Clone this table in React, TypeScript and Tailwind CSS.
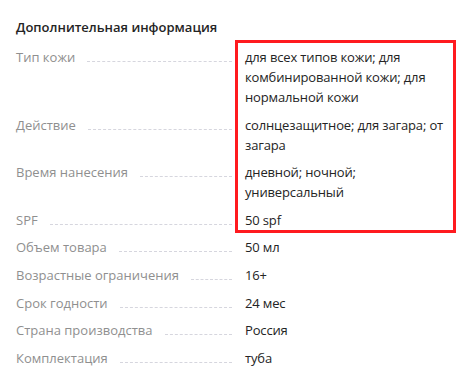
const rows: { label: string; value: string }[] = [
  { label: "Тип кожи", value: "для всех типов кожи; для комбинированной кожи; для нормальной кожи" },
  { label: "Действие", value: "солнцезащитное; для загара; от загара" },
  { label: "Время нанесения", value: "дневной; ночной; универсальный" },
  { label: "SPF", value: "50 spf" },
  { label: "Объем товара", value: "50 мл" },
  { label: "Возрастные ограничения", value: "16+" },
  { label: "Срок годности", value: "24 мес" },
  { label: "Страна производства", value: "Россия" },
  { label: "Комплектация", value: "туба" },
];

export default function App() {
  return (
    <div
      className="relative h-[386px] w-[461px] bg-white px-4 pt-[17px]"
      style={{ fontFamily: '"Open Sans", "Noto Sans", sans-serif' }}
    >
      <h2 className="text-[13px] font-semibold leading-5 text-[#242424]">
        Дополнительная информация
      </h2>
      <dl className="mt-[10px] flex flex-col gap-[7.6px]">
        {rows.map((row) => (
          <div key={row.label} className="flex items-start text-[13px] leading-5">
            <dt className="flex w-[216px] shrink-0 items-end text-[#8f8f8f]">
              <span className="whitespace-nowrap">{row.label}</span>
              <span className="mb-[5px] ml-3 flex-1 border-b border-dashed border-[#d6d6de]" />
            </dt>
            <dd className="ml-[13px] w-[206px] tracking-[-0.15px] text-[#242424]">{row.value}</dd>
          </div>
        ))}
      </dl>
      {/* highlight box */}
      <div className="pointer-events-none absolute left-[235px] top-[40px] h-[193px] w-[221px] border-[3px] border-[#ff1a1f]" />
    </div>
  );
}
